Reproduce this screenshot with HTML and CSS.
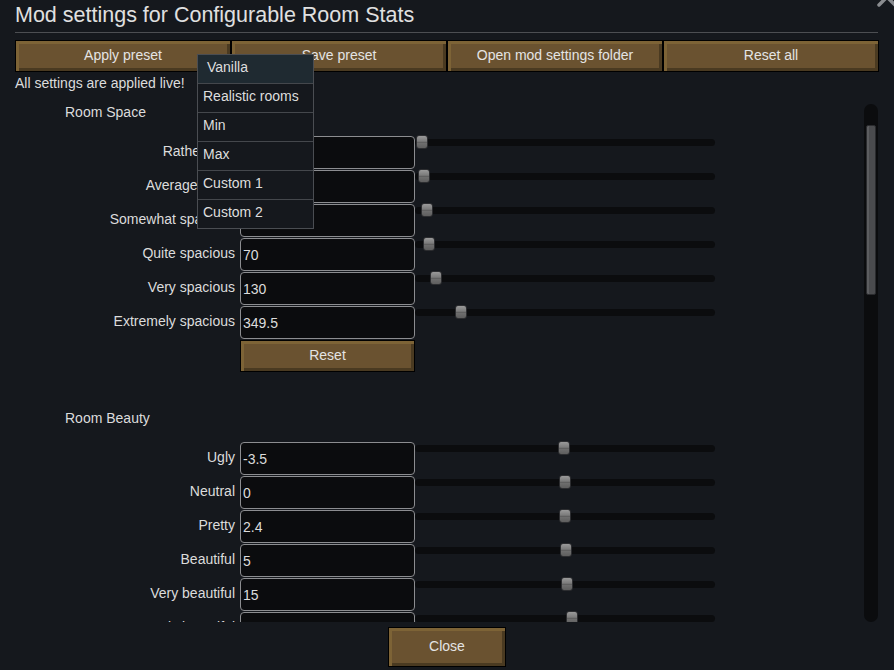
FILE: index.html
```html
<!DOCTYPE html>
<html>
<head>
<meta charset="utf-8">
<link rel="stylesheet" href="styles.css">
</head>
<body>
<div class="window">
  <h1 class="title">Mod settings for Configurable Room Stats</h1>
  <div class="rule"></div>
  <div class="toolbar">
    <button class="btn">Apply preset</button>
    <button class="btn">Save preset</button>
    <button class="btn">Open mod settings folder</button>
    <button class="btn">Reset all</button>
  </div>
  <p class="note">All settings are applied live!</p>

  <div class="scroller">
    <div class="content">
      <h2 class="section">Room Space</h2>
      <div class="rows">
        <div class="row"><span class="label">Rather tight</span><div class="field">12.5</div><div class="slider"><span class="knob" style="left:1px"></span></div></div>
        <div class="row"><span class="label">Average-sized</span><div class="field">29</div><div class="slider"><span class="knob" style="left:3px"></span></div></div>
        <div class="row"><span class="label">Somewhat spacious</span><div class="field">55</div><div class="slider"><span class="knob" style="left:6px"></span></div></div>
        <div class="row"><span class="label">Quite spacious</span><div class="field">70</div><div class="slider"><span class="knob" style="left:8px"></span></div></div>
        <div class="row"><span class="label">Very spacious</span><div class="field">130</div><div class="slider"><span class="knob" style="left:15px"></span></div></div>
        <div class="row"><span class="label">Extremely spacious</span><div class="field">349.5</div><div class="slider"><span class="knob" style="left:40px"></span></div></div>
        <div class="row row-reset"><span></span><button class="btn btn-reset">Reset</button></div>
      </div>

      <h2 class="section section-gap">Room Beauty</h2>
      <div class="rows">
        <div class="row"><span class="label">Ugly</span><div class="field">-3.5</div><div class="slider"><span class="knob" style="left:143px"></span></div></div>
        <div class="row"><span class="label">Neutral</span><div class="field">0</div><div class="slider"><span class="knob" style="left:144px"></span></div></div>
        <div class="row"><span class="label">Pretty</span><div class="field">2.4</div><div class="slider"><span class="knob" style="left:144px"></span></div></div>
        <div class="row"><span class="label">Beautiful</span><div class="field">5</div><div class="slider"><span class="knob" style="left:145px"></span></div></div>
        <div class="row"><span class="label">Very beautiful</span><div class="field">15</div><div class="slider"><span class="knob" style="left:146px"></span></div></div>
        <div class="row"><span class="label">Extremely beautiful</span><div class="field">50</div><div class="slider"><span class="knob" style="left:151px"></span></div></div>
      </div>
    </div>
    <div class="scrollbar"><div class="thumb"></div></div>
  </div>

  <div class="footer">
    <button class="btn btn-close">Close</button>
  </div>

  <ul class="dropdown">
    <li class="item active">Vanilla</li>
    <li class="item">Realistic rooms</li>
    <li class="item">Min</li>
    <li class="item">Max</li>
    <li class="item">Custom 1</li>
    <li class="item">Custom 2</li>
  </ul>

  <svg class="close-x" width="22" height="22" viewBox="0 0 22 22"><path d="M3 3 L19 19 M19 3 L3 19" stroke="#8a8c90" stroke-width="3.5" stroke-linecap="round"/></svg>
</div>
</body>
</html>
```

FILE: styles.css
```css
* { box-sizing: border-box; }
html, body {
  margin: 0;
  padding: 0;
  background: #15181d;
}
body {
  width: 894px;
  height: 670px;
  overflow: hidden;
  font-family: "Liberation Sans", Arial, sans-serif;
  font-size: 14px;
  color: #dcdcdc;
}
.window {
  position: relative;
  width: 894px;
  height: 670px;
  display: flex;
  flex-direction: column;
}
.title {
  margin: 0;
  padding: 0 0 0 15px;
  height: 32px;
  line-height: 30px;
  font-size: 21.5px;
  font-weight: normal;
  color: #e0e0e0;
}
.rule {
  height: 1px;
  margin: 0 16px 0 15px;
  background: #4c4e52;
}
.toolbar {
  margin: 7px 15px 0 15px;
  display: grid;
  grid-template-columns: repeat(4, 216px);
  height: 32px;
}
.btn {
  font-family: "Liberation Sans", Arial, sans-serif;
  font-size: 14px;
  color: #e4e4e4;
  background: #6a5230;
  border: 1px solid #000;
  box-shadow: inset 3px 3px 0 #7d6336, inset -3px -3px 0 #4a3a21;
  padding: 0 0 2px 0;
  margin: 0;
  height: 32px;
  line-height: 28px;
  text-align: center;
}
.note {
  margin: 0;
  padding-left: 15px;
  padding-top: 1px;
  height: 20px;
  line-height: 20px;
}
.scroller {
  margin-top: 8px;
  height: 522px;
  display: flex;
  overflow: hidden;
}
.content {
  width: 849px;
  margin-left: 15px;
  padding-top: 2px;
  overflow: hidden;
}
.section {
  margin: 0 0 14px 50px;
  font-size: 14px;
  font-weight: normal;
  height: 20px;
  line-height: 20px;
}
.section-gap {
  margin-top: 36px;
}
.rows {
  display: flex;
  flex-direction: column;
  gap: 1px;
}
.row {
  display: grid;
  grid-template-columns: 221px 179px 300px;
  height: 33px;
}
.label {
  text-align: right;
  padding-right: 1px;
  line-height: 30px;
  white-space: nowrap;
}
.field {
  margin-left: 4px;
  width: 175px;
  height: 33px;
  background: #0b0c0e;
  border: 1px solid #8c8d90;
  border-radius: 4px;
  padding-left: 2px;
  line-height: 33px;
  color: #dcdcdc;
}
.slider {
  position: relative;
  height: 7px;
  margin-top: 3px;
  background: #0b0c0e;
  border-radius: 4px;
  width: 300px;
}
.knob {
  position: absolute;
  top: -4px;
  width: 12px;
  height: 14px;
  border-radius: 3px;
  border: 1px solid #2c2d30;
  background: linear-gradient(#9a9a9a 0%, #7a7a7a 45%, #565656 50%, #6e6e6e 60%, #5e5e5e 100%);
}
.row-reset {
  height: 32px;
}
.btn-reset {
  margin-left: 4px;
  width: 175px;
}
.scrollbar {
  margin-top: 4px;
  width: 14px;
  height: 518px;
  background: #0b0c0e;
  border-radius: 7px;
  padding: 21px 2px 0 2px;
}
.thumb {
  width: 10px;
  height: 170px;
  border-radius: 2px;
  background: #4a4b4e;
  border: 1px solid #2a2b2e;
  box-shadow: inset 2px 0 0 #5c5d60;
}
.footer {
  margin-top: 5px;
  display: flex;
  justify-content: center;
}
.btn-close {
  width: 118px;
  height: 40px;
  line-height: 36px;
}
.dropdown {
  position: absolute;
  left: 197px;
  top: 54px;
  width: 117px;
  margin: 0;
  padding: 0;
  list-style: none;
  background: #15181d;
  border: 1px solid #4a4d52;
}
.item {
  height: 29px;
  line-height: 25px;
  padding-left: 5px;
  border-top: 1px solid #44474c;
  color: #dedede;
}
.item:first-child {
  border-top: none;
  height: 28px;
}
.item.active {
  background: #1f2a31;
  padding-left: 9px;
}
.close-x {
  position: absolute;
  right: -4px;
  top: -14px;
}
```
